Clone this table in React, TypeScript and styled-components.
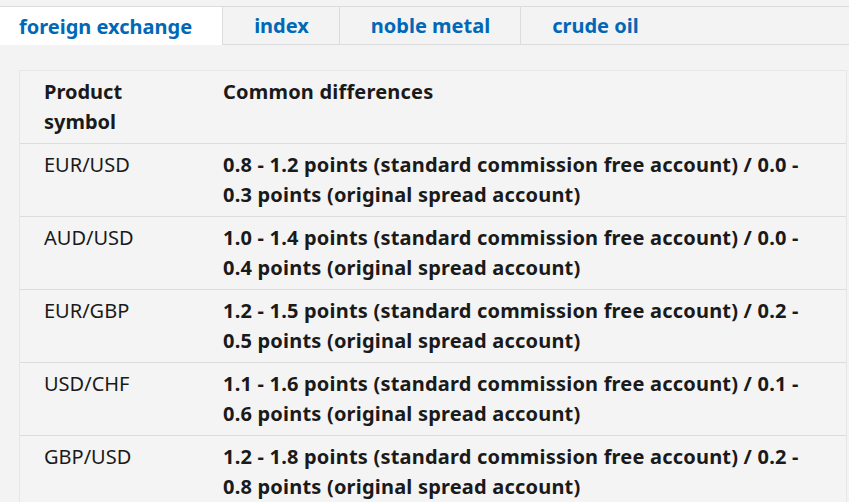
import React from "react";
import styled, { createGlobalStyle } from "styled-components";

const Global = createGlobalStyle`
  html, body { margin: 0; padding: 0; background: #f3f3f3; }
  body { font-family: "Segoe UI", "Noto Sans", "Open Sans", sans-serif; overflow: hidden; }
`;

const Page = styled.div`
  width: 849px;
  height: 502px;
  background: #f3f3f3;
  padding-top: 6px;
  box-sizing: border-box;
`;

const TabBar = styled.div`
  display: flex;
  border-top: 1px solid #dcdcdc;
  border-bottom: 1px solid #dcdcdc;
  height: 37px;
`;

const Tab = styled.div<{ $active?: boolean; $first?: boolean; $last?: boolean }>`
  display: flex;
  align-items: center;
  padding: 0 30px 0 ${(p) => (p.$first ? "19px" : "31px")};
  margin-bottom: ${(p) => (p.$active ? "-1px" : "0")};
  background: ${(p) => (p.$active ? "#ffffff" : "transparent")};
  border-right: ${(p) => (p.$last ? "none" : "1px solid #dcdcdc")};
  color: #0068b7;
  font-weight: 700;
  font-size: 20px;
  white-space: nowrap;
`;

const Content = styled.div`
  padding: 25px 0 0 19px;
`;

const Table = styled.div`
  width: 826px;
  display: grid;
  grid-template-columns: 203px 1fr;
  background: #f4f4f4;
  border: 1px solid #e6e6e6;
  border-bottom: none;
`;

const Cell = styled.div<{ $bold?: boolean }>`
  padding: 6px 30px 6px 24px;
  font-size: 20px;
  line-height: 30px;
  color: #1a1a1a;
  font-weight: ${(p) => (p.$bold ? 700 : 400)};
  min-height: 60px;
  border-bottom: 1px solid #dcdcdc;
`;

const SymCell = styled(Cell)``;
const ValCell = styled(Cell)`
  padding-left: 0;
  padding-right: 32px;
  letter-spacing: 0.2px;
`;

const rows: [string, string][] = [
  ["EUR/USD", "0.8 - 1.2 points (standard commission free account) / 0.0 - 0.3 points (original spread account)"],
  ["AUD/USD", "1.0 - 1.4 points (standard commission free account) / 0.0 - 0.4 points (original spread account)"],
  ["EUR/GBP", "1.2 - 1.5 points (standard commission free account) / 0.2 - 0.5 points (original spread account)"],
  ["USD/CHF", "1.1 - 1.6 points (standard commission free account) / 0.1 - 0.6 points (original spread account)"],
  ["GBP/USD", "1.2 - 1.8 points (standard commission free account) / 0.2 - 0.8 points (original spread account)"],
];

export default function App() {
  return (
    <Page>
      <Global />
      <TabBar>
        <Tab $active $first>foreign exchange</Tab>
        <Tab>index</Tab>
        <Tab>noble metal</Tab>
        <Tab $last>crude oil</Tab>
      </TabBar>
      <Content>
        <Table>
          <SymCell $bold>Product symbol</SymCell>
          <ValCell $bold>Common differences</ValCell>
          {rows.map(([s, v]) => (
            <React.Fragment key={s}>
              <SymCell>{s}</SymCell>
              <ValCell $bold>{v}</ValCell>
            </React.Fragment>
          ))}
        </Table>
      </Content>
    </Page>
  );
}
